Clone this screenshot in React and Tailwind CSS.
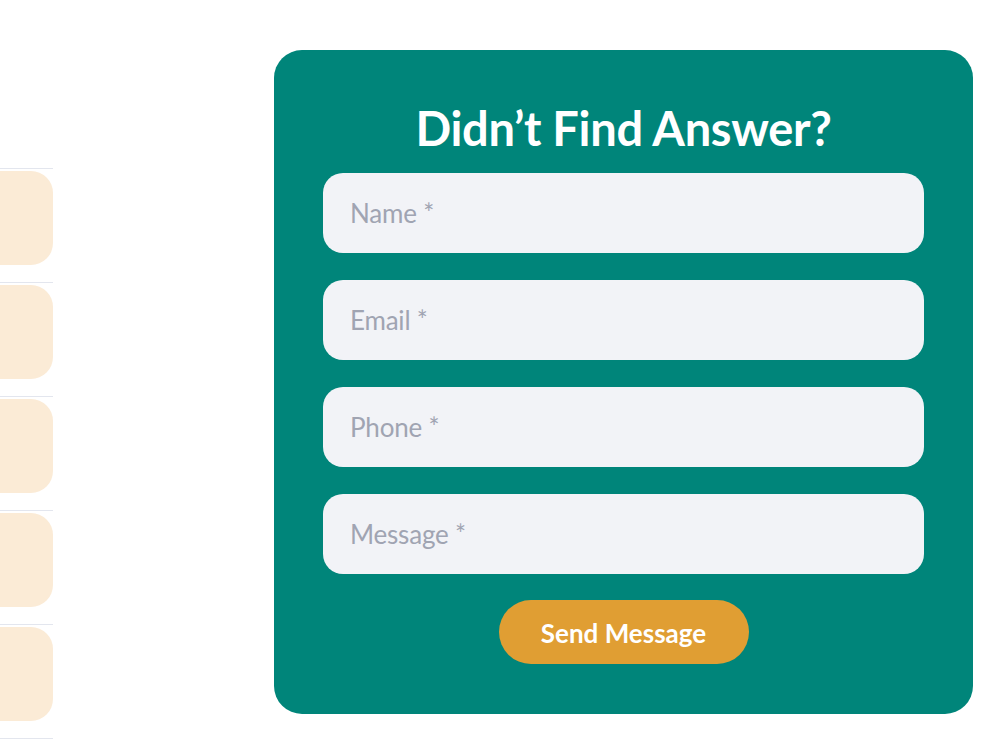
import React from "react";

const fields = ["Name *", "Email *", "Phone *", "Message *"];

function SideTabs() {
  return (
    <div className="w-[53px] shrink-0 pt-[168px] flex flex-col">
      {[0, 1, 2, 3, 4].map((i) => (
        <div key={i} className="border-t border-[#e3e6ee] pt-[2px] pb-[17px]">
          <div className="h-[94px] rounded-r-[22px] bg-[#fbebd6]" />
        </div>
      ))}
      <div className="border-t border-[#e3e6ee]" />
    </div>
  );
}

export default function App() {
  return (
    <div
      className="w-[1000px] h-[750px] bg-white flex overflow-hidden"
      style={{ fontFamily: "Lato, 'Noto Sans', sans-serif" }}
    >
      <SideTabs />
      <div className="ml-[221px] mt-[50px] w-[699px] h-[664px] rounded-[28px] bg-[#00857a] px-[49px] pt-[53px] pb-[50px] flex flex-col">
        <h2 className="text-center text-white font-bold text-[47px] leading-[50px] tracking-[-0.3px]">
          Didn’t Find Answer?
        </h2>
        <form className="mt-[20px] flex flex-col gap-[27px]">
          {fields.map((f) => (
            <input
              key={f}
              type="text"
              placeholder={f}
              className="h-[80px] w-full rounded-[20px] bg-[#f2f3f7] pl-[27px] text-[26px] tracking-[-0.2px] text-gray-700 placeholder:text-[#a0a4b2] outline-none"
              style={{ fontFamily: "Lato, sans-serif" }}
            />
          ))}
        </form>
        <div className="mt-[26px] flex justify-center">
          <button
            type="button"
            className="h-[64px] w-[250px] rounded-full bg-[#e09e33] pt-[2px] text-white font-bold text-[26px]"
            style={{ fontFamily: "Lato, sans-serif" }}
          >
            Send Message
          </button>
        </div>
      </div>
    </div>
  );
}
